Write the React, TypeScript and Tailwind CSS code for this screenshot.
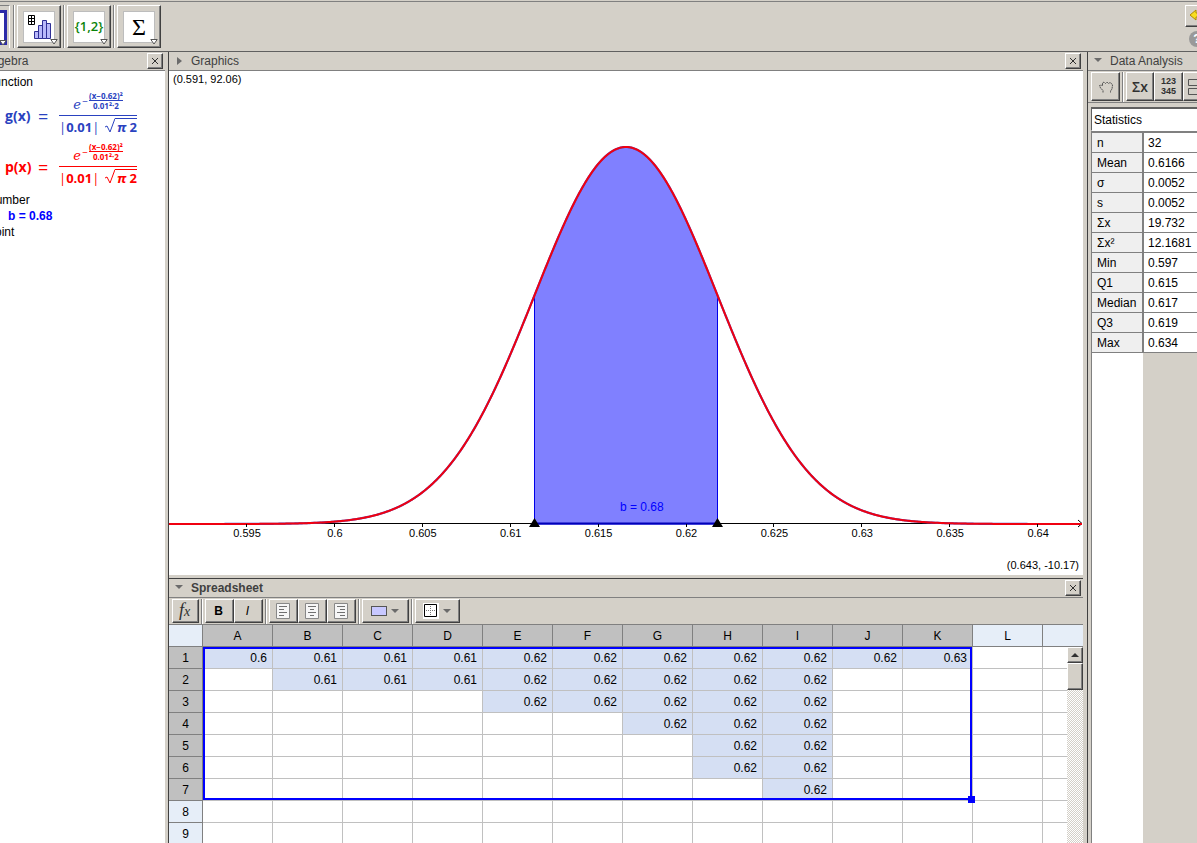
import type { ReactNode } from 'react'
import clsx from 'clsx'

const RAISED =
  'border border-t-white border-l-white border-b-[#404040] border-r-[#404040] bg-[#d4d0c8] shadow-[inset_-1px_-1px_0_#808080]'

const STATS = [
  ['n', '32'],
  ['Mean', '0.6166'],
  ['σ', '0.0052'],
  ['s', '0.0052'],
  ['Σx', '19.732'],
  ['Σx²', '12.1681'],
  ['Min', '0.597'],
  ['Q1', '0.615'],
  ['Median', '0.617'],
  ['Q3', '0.619'],
  ['Max', '0.634'],
]

const COLUMNS = ['A', 'B', 'C', 'D', 'E', 'F', 'G', 'H', 'I', 'J', 'K', 'L', '']

const ROWS = [
  ['0.6', '0.61', '0.61', '0.61', '0.62', '0.62', '0.62', '0.62', '0.62', '0.62', '0.63'],
  ['', '0.61', '0.61', '0.61', '0.62', '0.62', '0.62', '0.62', '0.62'],
  ['', '', '', '', '0.62', '0.62', '0.62', '0.62', '0.62'],
  ['', '', '', '', '', '', '0.62', '0.62', '0.62'],
  ['', '', '', '', '', '', '', '0.62', '0.62'],
  ['', '', '', '', '', '', '', '0.62', '0.62'],
  ['', '', '', '', '', '', '', '', '0.62'],
  [],
  [],
]

const TICKS = ['0.595', '0.6', '0.605', '0.61', '0.615', '0.62', '0.625', '0.63', '0.635', '0.64']

// plot geometry, in the chart's own units
const MEAN_X = 457
const SIGMA = 91.5
const BASE_Y = 453
const PEAK = 377

function curve(from: number, to: number) {
  const points: string[] = []
  for (let x = from; x <= to; x += 1) {
    const z = (x - MEAN_X) / SIGMA
    points.push(`${x},${(BASE_Y - PEAK * Math.exp((-z * z) / 2)).toFixed(2)}`)
  }
  return points.join(' ')
}

function Separator() {
  return <span className="w-0.5 shrink-0 self-stretch border-x border-l-[#808080] border-r-white" />
}

function CloseButton({ label }: { label: string }) {
  return (
    <button type="button" aria-label={label} className={clsx(RAISED, 'flex size-4 shrink-0 items-center justify-center')}>
      <svg viewBox="0 0 8 8" className="size-2" stroke="#303030" fill="none">
        <path d="M1 1l6 6M7 1l-6 6" />
      </svg>
    </button>
  )
}

function PanelHeader({ title, arrow, bold, children }: { title: string; arrow?: 'right' | 'down'; bold?: boolean; children?: ReactNode }) {
  return (
    <div className="flex h-[19px] shrink-0 items-center border-b border-[#808080] pr-0.5">
      {arrow && (
        <svg viewBox="0 0 8 8" className="ml-1.5 mr-2 size-2 shrink-0" fill="#6b6b6b">
          {arrow === 'right' ? <path d="M2 0l5 4-5 4z" /> : <path d="M0 1h8L4 5z" />}
        </svg>
      )}
      <h2 className={clsx('flex-1 whitespace-nowrap text-xs text-[#404040]', bold && 'font-bold')}>{title}</h2>
      {children}
    </div>
  )
}

function Corner() {
  return (
    <svg viewBox="0 0 8 6" className="absolute bottom-0.5 right-0.5 h-1.5 w-2" fill="#fff" stroke="#555">
      <path d="M.8.5h6.4L4 5z" />
    </svg>
  )
}

function ToolButton({ label, children }: { label: string; children: ReactNode }) {
  return (
    <button type="button" aria-label={label} className={clsx(RAISED, 'relative h-[43px] w-11 shrink-0')}>
      <span className="mx-auto flex size-8 items-center justify-center border border-[#bdbdbd] bg-white">{children}</span>
      <Corner />
    </button>
  )
}

function Toolbar() {
  return (
    <header className="mt-px flex h-[50px] shrink-0 justify-between border-t border-[#808080] pt-[3px]">
      <div className="flex items-start">
        <button type="button" aria-label="Graphics tool" className="relative h-[43px] w-[10px] border-r border-t border-r-white border-t-[#808080]">
          <span className="block h-[35px] w-[7px] border-y-3 border-r-3 border-[#2b2ba8] bg-white" />
          <Corner />
        </button>
        <div className="flex items-start gap-0.5 pl-[3px]">
          <Separator />
          <ToolButton label="One variable analysis">
            <svg viewBox="0 0 28 28" className="size-7 shrink-0" fill="none">
              <path d="M3.500 2.500h6v9h-6zM6.500 2.500v9M3.500 5.500h6M3.500 8.500h6" stroke="#000" />
              <path d="M9.500 18.500h4v7h-4zM13.500 12.500h4v13h-4zM17.500 7.500h4v18h-4zM21.500 10.500h4v15h-4z" fill="#b8b8fa" stroke="#2f2f96" />
            </svg>
          </ToolButton>
          <Separator />
          <ToolButton label="Create list">
            <span className="font-['Open_Sans',sans-serif] text-[13px] font-semibold text-[#0a840a]">{'{1,2}'}</span>
          </ToolButton>
          <Separator />
          <ToolButton label="Sum">
            <span className="font-['Liberation_Serif',serif] text-2xl leading-none text-black">Σ</span>
          </ToolButton>
        </div>
      </div>
      <div className="flex w-3 flex-col gap-1 overflow-hidden">
        <button type="button" aria-label="Undo" className={clsx(RAISED, 'flex h-[22px] w-6 shrink-0 items-center')}>
          <svg viewBox="0 0 16 14" className="ml-[3px] h-3.5 w-4 shrink-0" fill="#f8dd20" stroke="#b08a00">
            <path d="M1 6l6-5v3h8v4H7v3z" />
          </svg>
        </button>
        <button type="button" aria-label="Help" className="ml-1 flex size-4 shrink-0 items-center justify-center rounded-full bg-[#999] text-xs font-bold text-white">
          ?
        </button>
      </div>
    </header>
  )
}

function Formula({ name, color }: { name: string; color: string }) {
  return (
    <div className={clsx("flex h-[51px] items-center pl-[18px] font-['Open_Sans',sans-serif] text-[13px] font-bold leading-4", color)}>
      <span className="w-[33px] text-sm">{name}(x)</span>
      <span className="w-[21px] text-lg font-normal">=</span>
      <div className="flex w-[78px] flex-col">
        <div className="flex h-[25px] justify-center border-b border-current pb-0.5">
          <i className="self-end font-['DejaVu_Serif',serif] font-normal">e</i>
          <span className="w-2 text-center text-[10px] font-normal leading-5">−</span>
          <span className="flex flex-col text-center text-[8px] leading-[9px]">
            <span className="border-b border-current">(x−0.62)²</span>
            <span>0.01²·2</span>
          </span>
        </div>
        <div className="flex h-[25px] items-start justify-between pt-0.5">
          <span className="leading-[18px]">
            <span className="font-normal">|</span>0.01<span className="font-normal">|</span>
          </span>
          <span className="flex">
            <svg viewBox="0 0 10 15" className="h-[15px] w-2.5" fill="none" stroke="currentColor">
              <path d="M0 9l2-1 3 6L10 .5" />
            </svg>
            <span className="border-t border-current pl-0.5 leading-4">
              <i>π</i> 2
            </span>
          </span>
        </div>
      </div>
    </div>
  )
}

function AlgebraPanel() {
  return (
    <section className="flex w-[165px] shrink-0 flex-col overflow-hidden">
      <div className="-ml-[13px] flex flex-1 flex-col">
        <PanelHeader title="Algebra">
          <CloseButton label="Close Algebra" />
        </PanelHeader>
        <div className="flex-1 bg-white pt-[3px] leading-4">
          <p>Function</p>
          <Formula name="g" color="text-[#2a42c0]" />
          <Formula name="p" color="text-[#ff0000]" />
          <p>Number</p>
          <p className="pl-[21px] font-bold text-[#0000ff]">b = 0.68</p>
          <p>Point</p>
        </div>
      </div>
    </section>
  )
}

function Graph() {
  return (
    <svg viewBox="0 0 914 504" className="block w-full shrink-0 bg-white" role="img" aria-label="Normal distribution">
      <polygon points={`365.500,${BASE_Y} ${curve(365.5, 548.5)} 548.500,${BASE_Y}`} fill="#8080ff" stroke="#0000e8" />
      <path d="M0 452.500H913M909 449l4 3.500-4 3.500" stroke="#000" fill="none" />
      <path d="M366 452.500H548" stroke="#0000b8" strokeWidth="2" />
      <polyline points={curve(0, 913)} fill="none" stroke="#5050c8" strokeWidth="2.200" />
      <polyline points={curve(0, 913)} fill="none" stroke="#f00010" strokeWidth="2" />
      <g fontSize="11" textAnchor="middle">
        {TICKS.map((tick, i) => (
          <g key={tick}>
            <path d={`M${Math.round(77 + i * 87.9) + 0.5} 453v3`} stroke="#000" />
            <text x={78 + i * 87.9} y="466">
              {tick}
            </text>
          </g>
        ))}
      </g>
      <path d="M365.500 447l5.500 9h-11zM548.500 447l5.500 9h-11z" />
      <text x="451" y="440" fontSize="12" fill="#0000ff">
        b = 0.68
      </text>
      <text x="4" y="12" fontSize="11">
        (0.591, 92.06)
      </text>
      <text x="910" y="498" fontSize="11" textAnchor="end">
        (0.643, -10.17)
      </text>
    </svg>
  )
}

function FormatButton({ label, width = 'w-[29px]', children }: { label: string; width?: string; children: ReactNode }) {
  return (
    <button type="button" aria-label={label} className={clsx(RAISED, 'flex h-6 shrink-0 items-center justify-center gap-1 pr-0.5', width)}>
      {children}
    </button>
  )
}

function AlignIcon({ d }: { d: string }) {
  return (
    <svg viewBox="0 0 14 16" className="h-4 w-3.5" fill="#f6f6f6" stroke="#888">
      <path d="M.5.5h13v15H.5z" />
      <path d={d} stroke="#707070" />
    </svg>
  )
}

function DownArrow() {
  return (
    <svg viewBox="0 0 8 4" className="h-1 w-2" fill="#6b6b6b">
      <path d="M0 0h8L4 4z" />
    </svg>
  )
}

function FormatBar() {
  return (
    <div className="flex h-[27px] shrink-0 items-start gap-0.5 border-b border-[#808080] pl-[3px] pt-px">
      <FormatButton label="Show input bar" width="w-[27px]">
        <i className="font-['Liberation_Serif',serif] text-lg leading-none text-[#303030]">
          f<span className="text-sm">x</span>
        </i>
      </FormatButton>
      <Separator />
      <div className="flex">
        <FormatButton label="Bold">
          <b>B</b>
        </FormatButton>
        <FormatButton label="Italic">
          <i>I</i>
        </FormatButton>
      </div>
      <Separator />
      <div className="flex">
        <FormatButton label="Align left">
          <AlignIcon d="M3 3.500h8M3 6.500h5M3 9.500h8M3 12.500h5" />
        </FormatButton>
        <FormatButton label="Align center">
          <AlignIcon d="M3 3.500h8M5 6.500h4M3 9.500h8M5 12.500h4" />
        </FormatButton>
        <FormatButton label="Align right">
          <AlignIcon d="M3 3.500h8M6 6.500h5M3 9.500h8M6 12.500h5" />
        </FormatButton>
      </div>
      <Separator />
      <FormatButton label="Background color" width="w-[47px]">
        <span className="h-2.5 w-4 border border-[#555] bg-[#c8c8ff]" />
        <DownArrow />
      </FormatButton>
      <Separator />
      <FormatButton label="Borders" width="w-[45px]">
        <svg viewBox="0 0 16 16" className="size-4" fill="none" stroke="#000">
          <path d="M0 0h16v16H0z" fill="#fff" stroke="none" />
          <path d="M1.500 1.500h12v12h-12z" />
          <path d="M7.500 3v10M3 7.500h10" stroke="#777" strokeDasharray="1 1" />
        </svg>
        <DownArrow />
      </FormatButton>
    </div>
  )
}

function Sheet() {
  return (
    <div className="relative min-h-0 flex-1 overflow-hidden bg-white">
      <table className="w-[944px] table-fixed border-separate border-spacing-0 text-xs">
        <thead>
          <tr className="h-[22px]">
            <th className="w-[34px] border-b border-r border-[#808080] bg-[#e6eef8] p-0" />
            {COLUMNS.map((col, i) => (
              <th key={i} className={clsx('w-[70px] border-b border-r border-[#808080] p-0 font-normal', i < 11 ? 'bg-[#c0c0c0]' : 'bg-[#e6eef8]')}>
                {col}
              </th>
            ))}
          </tr>
        </thead>
        <tbody>
          {ROWS.map((row, r) => (
            <tr key={r} className="h-[22px]">
              <th className={clsx('border-b border-r border-[#808080] p-0 font-normal', r < 7 ? 'bg-[#c0c0c0]' : 'bg-[#e6eef8]')}>{r + 1}</th>
              {COLUMNS.map((_, c) => (
                <td key={c} className={clsx('border-b border-r border-[#c0c0c0] p-0 pr-[5px] text-right', row[c] && 'bg-[#d5dff3]')}>
                  {row[c]}
                </td>
              ))}
            </tr>
          ))}
        </tbody>
      </table>
      <div className="pointer-events-none absolute left-[34px] top-[22px] h-[153px] w-[769px] border-2 border-[#0000ff]">
        <span className="absolute -bottom-[5px] -right-[5px] size-[7px] bg-[#0000ff]" />
      </div>
      <div className="absolute bottom-0 right-0 top-[22px] flex w-4 flex-col bg-[repeating-conic-gradient(#d4d0c8_0_25%,#fff_0_50%)] bg-[length:2px_2px]">
        <button type="button" aria-label="Scroll up" className={clsx(RAISED, 'flex h-4 items-center justify-center')}>
          <svg viewBox="0 0 8 4" className="h-1 w-2" fill="#303030">
            <path d="M0 4h8L4 0z" />
          </svg>
        </button>
        <span className={clsx(RAISED, 'h-[27px]')} />
      </div>
    </div>
  )
}

function DataAnalysis() {
  return (
    <section className="flex w-[110px] shrink-0 flex-col overflow-hidden border-l border-[#404040]">
      <PanelHeader title="Data Analysis" arrow="down" />
      <div className="flex h-8 shrink-0 items-start gap-0.5 border-b border-[#808080] pl-[3px] pt-px">
        <button type="button" aria-label="Move" className={clsx(RAISED, 'flex h-[29px] w-[29px] shrink-0 items-center justify-center')}>
          <svg viewBox="0 0 16 16" className="size-4" fill="none" stroke="#555" strokeDasharray="2 .5">
            <path d="M5 13.500v-2L2.500 9 1.500 6.500l2-.5 1 1V4l1.500-1 1.500 1.500L9 3l1.500 1.500L12 3.500l1.500 1 1 1.500-.5 4-1.500 2v1.500" />
          </svg>
        </button>
        <Separator />
        <div className="flex text-[#303030]">
          <button type="button" className={clsx(RAISED, "h-[29px] w-7 shrink-0 font-['Open_Sans',sans-serif] text-sm font-semibold")}>
            Σx
          </button>
          <button type="button" className={clsx(RAISED, 'h-[29px] w-[29px] shrink-0 pb-0.5 text-[9px] font-bold leading-[10px]')}>
            <span className="block">123</span>
            <span className="block">345</span>
          </button>
          <button type="button" aria-label="Second plot" className={clsx(RAISED, 'h-[29px] w-[29px] shrink-0')}>
            <svg viewBox="0 0 18 18" className="ml-1 size-[18px]" fill="none" stroke="#555">
              <path d="M.5 1.500h16v6H.5zM.5 10.500h16v6H.5z" />
            </svg>
          </button>
        </div>
      </div>
      <div className="flex min-h-0 flex-1 flex-col pl-[3px] pt-1">
        <select
          aria-label="Statistics view"
          className="h-6 w-[130px] shrink-0 appearance-none rounded-none border-b border-l border-t-2 border-b-white border-l-[#606060] border-t-[#606060] bg-white pl-0.5 text-xs outline-none"
        >
          <option>Statistics</option>
        </select>
        <div className="flex-1 border-l border-t-2 border-[#808080] bg-[linear-gradient(to_right,#fff_51px,#d4d0c8_51px)]">
          <table className="w-[130px] table-fixed border-separate border-spacing-0 text-xs">
            <tbody>
              {STATS.map(([name, value]) => (
                <tr key={name} className="h-5">
                  <th className="w-[52px] border-b border-r-2 border-[#808080] bg-[#efefef] p-0 pl-[5px] text-left font-normal">{name}</th>
                  <td className="border-b border-[#808080] bg-white p-0 pl-1">{value}</td>
                </tr>
              ))}
            </tbody>
          </table>
        </div>
      </div>
    </section>
  )
}

export default function App() {
  return (
    <div className="flex h-screen w-full flex-col overflow-hidden bg-[#d4d0c8] font-['Liberation_Sans',Arial,sans-serif] text-xs text-black">
      <Toolbar />
      <div className="flex min-h-0 flex-1 border-t border-[#606060]">
        <AlgebraPanel />
        <main className="ml-[3px] mr-1 flex min-w-0 flex-1 flex-col border-l border-[#404040]">
          <PanelHeader title="Graphics" arrow="right">
            <CloseButton label="Close Graphics" />
          </PanelHeader>
          <Graph />
          <section className="mt-[3px] flex min-h-0 flex-1 flex-col border-t border-[#404040]">
            <PanelHeader title="Spreadsheet" arrow="down" bold>
              <CloseButton label="Close Spreadsheet" />
            </PanelHeader>
            <FormatBar />
            <Sheet />
          </section>
        </main>
        <DataAnalysis />
      </div>
    </div>
  )
}
